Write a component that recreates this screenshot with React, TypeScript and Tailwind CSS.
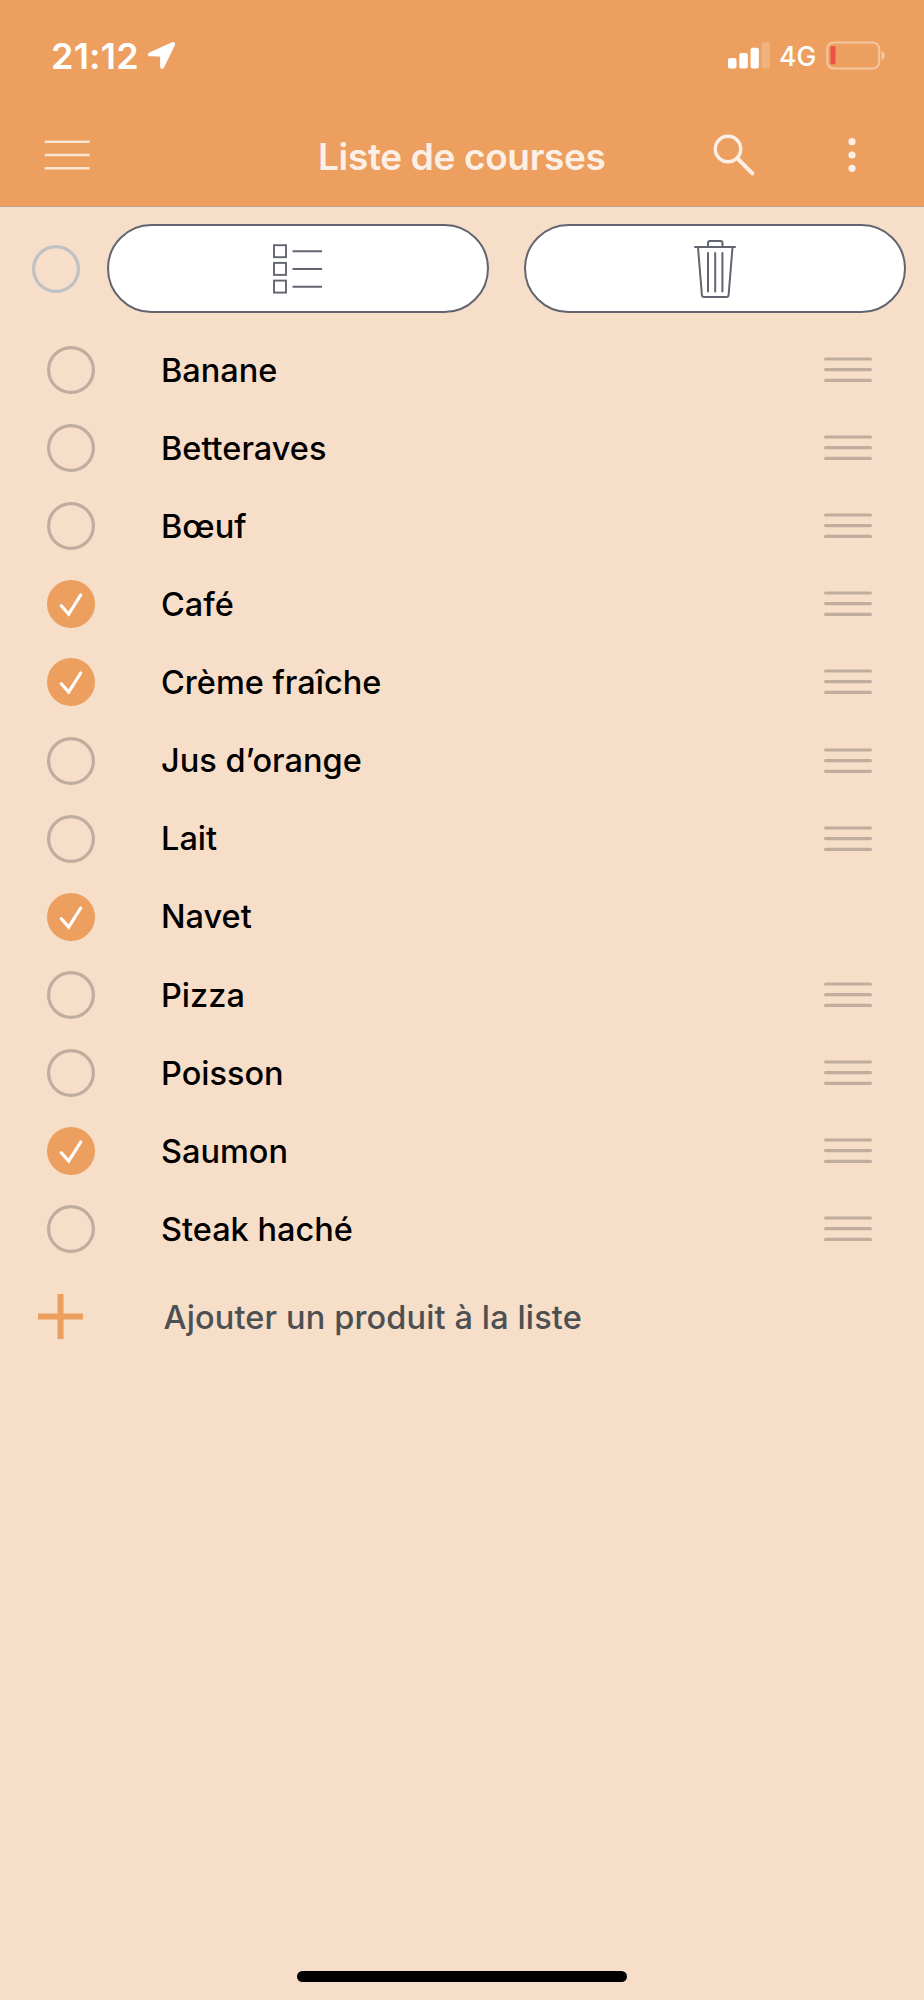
type Product = {
  name: string;
  checked?: boolean;
  fixed?: boolean;
};

const products: Product[] = [
  { name: "Banane" },
  { name: "Betteraves" },
  { name: "Bœuf" },
  { name: "Café", checked: true },
  { name: "Crème fraîche", checked: true },
  { name: "Jus d’orange" },
  { name: "Lait" },
  { name: "Navet", checked: true, fixed: true },
  { name: "Pizza" },
  { name: "Poisson" },
  { name: "Saumon", checked: true },
  { name: "Steak haché" },
];

function StatusBar() {
  return (
    <div className="flex h-[110px] items-center justify-between pl-[51px] pr-[38px] text-white">
      <div className="flex items-center gap-2">
        <span className="w-[88px] pt-px text-[36px] leading-none font-semibold tracking-[0.2px]">21:12</span>
        <svg width="30" height="30" viewBox="0 0 30 30" fill="currentColor">
          <path d="M25 2.300 2.100 12.800c-1.800 1-1.400 3.500.8 3.500l9.400.1c.5 0 .8.3.8.8l.1 9.600c0 2.300 2.900 2.700 3.800.8L27.900 5.200c.9-2-.9-3.900-2.900-2.900Z" />
        </svg>
      </div>
      <div className="flex items-center">
        <svg width="42" height="28" viewBox="0 0 42 28" fill="currentColor">
          <rect x="0" y="17" width="8.500" height="10.500" rx="2" />
          <rect x="11.300" y="12" width="8.500" height="15.500" rx="2" />
          <rect x="22.600" y="6.700" width="8.300" height="20.800" rx="2" />
          <rect x="33.700" y="1.300" width="8.300" height="26.200" rx="2" opacity=".2" />
        </svg>
        <span className="ml-[9px] w-[38px] pt-[3px] text-[26.500px] leading-none font-medium">4G</span>
        <svg className="ml-[9px]" width="60" height="30" viewBox="0 0 60 30" fill="none">
          <rect x="1.200" y="2.400" width="52" height="26" rx="6.500" stroke="#fff" strokeOpacity=".42" strokeWidth="2" />
          <path d="M55.500 11c4.500 1.600 4.500 7.400 0 9Z" fill="#fff" fillOpacity=".45" />
          <rect x="4.500" y="6.300" width="5" height="18" rx="1" fill="#ed5045" />
        </svg>
      </div>
    </div>
  );
}

function NavBar() {
  return (
    <div className="flex h-[90px] items-center pl-[44px] pr-[68px] text-[#fcf0e6]">
      <svg width="46" height="32" viewBox="0 0 46 32" stroke="#fbe5d3" strokeWidth="2.400">
        <path d="M.6 2.700H45.600M.6 16H45.600M.6 29.300H45.600" />
      </svg>
      <h1 className="ml-[228px] w-[290px] pt-[2px] text-[37px] leading-none font-semibold tracking-[-0.35px] whitespace-nowrap">
        Liste de courses
      </h1>
      <svg className="ml-[105px]" width="42" height="42" viewBox="0 0 42 42" fill="none" stroke="currentColor">
        <circle cx="15" cy="15" r="12.700" strokeWidth="3.400" />
        <path d="M24.500 24.500 39.300 39.300" strokeWidth="4" strokeLinecap="round" />
      </svg>
      <svg className="ml-auto" width="8" height="36" viewBox="0 0 8 36" fill="currentColor">
        <circle cx="4" cy="4.700" r="3.600" />
        <circle cx="4" cy="18" r="3.600" />
        <circle cx="4" cy="31.300" r="3.600" />
      </svg>
    </div>
  );
}

function ListIcon() {
  return (
    <svg width="50" height="50" viewBox="0 0 50 50" fill="none" stroke="#62656f" strokeWidth="1.900">
      <rect x="1" y="1.200" width="12" height="12" />
      <rect x="1" y="18.900" width="12" height="12" />
      <rect x="1" y="36.600" width="12" height="12" />
      <path d="M19.500 7.300H49M19.500 25H49M19.500 42.700H49" />
    </svg>
  );
}

function TrashIcon() {
  return (
    <svg width="42" height="58" viewBox="0 0 42 58" fill="none" stroke="#62656f" strokeWidth="2" strokeLinecap="round">
      <path d="M1 7H41M14 6.500V3Q14 1 16 1H26.500Q28.500 1 28.500 3V6.500" />
      <path d="m4 7.500 3.900 47.500Q8.100 57 10 57H32.500Q34.400 57 34.600 55L38.500 7.500" />
      <path d="M14 13V51.500M21.200 13V51.500M28.400 13V51.500" />
    </svg>
  );
}

function Ring({ className }: { className: string }) {
  return (
    <svg className={className} width="48" height="50" viewBox="0 0 48 50" fill="none" stroke="currentColor">
      <circle cx="24" cy="25" r="22.400" strokeWidth="3.200" />
    </svg>
  );
}

function Toolbar() {
  return (
    <div className="flex h-[124px] items-center pb-px pl-8">
      <Ring className="text-[#bec2c5]" />
      <button className="ml-[27px] flex h-[89px] w-[382px] items-center justify-center rounded-full border-2 border-[#62656f] bg-white">
        <ListIcon />
      </button>
      <button className="ml-[35px] flex h-[89px] w-[382px] items-center justify-center rounded-full border-2 border-[#62656f] bg-white">
        <TrashIcon />
      </button>
    </div>
  );
}

function Checkbox({ checked }: { checked?: boolean }) {
  if (!checked) {
    return <Ring className="text-[#c0ada0]" />;
  }
  return (
    <svg width="48" height="50" viewBox="0 0 48 50" fill="none">
      <circle cx="24" cy="25" r="24" fill="#ec9f5e" />
      <path d="m14.300 26.700 7.400 8.300L33.700 16" stroke="#fff" strokeWidth="3.200" strokeLinecap="round" />
    </svg>
  );
}

function DragHandle() {
  return (
    <svg className="ml-auto" width="48" height="26" viewBox="0 0 48 26" stroke="#c0ada0" strokeWidth="3.200" strokeLinecap="round">
      <path d="M1.600 2H46.400M1.600 12.700H46.400M1.600 23.400H46.400" />
    </svg>
  );
}

export default function App() {
  return (
    <div className="flex h-[2000px] w-[924px] flex-col bg-[#f7dec8] font-['Inter',sans-serif]">
      <header className="h-[207px] border-b border-[#c4a48a] bg-[#ec9f5e]">
        <StatusBar />
        <NavBar />
      </header>
      <Toolbar />

      <ul>
        {products.map((product) => (
          <li key={product.name} className="flex h-[78.100px] items-center pr-[52px] pl-[47px]">
            <Checkbox checked={product.checked} />
            <span className="ml-[66px] pt-[2px] text-[32.500px] leading-none font-medium whitespace-nowrap text-black">
              {product.name}
            </span>
            {!product.fixed && <DragHandle />}
          </li>
        ))}
      </ul>

      <div className="flex h-[97px] items-center pl-[38px]">
        <svg width="45" height="45" viewBox="0 0 45 45" stroke="#ec9f5e" strokeWidth="6">
          <path d="M0 22.500H45M22.500 0V45" />
        </svg>
        <span className="ml-[80.500px] pt-[3px] text-[32.500px] leading-none font-medium tracking-[0.13px] whitespace-nowrap text-[#4d5052]">
          Ajouter un produit à la liste
        </span>
      </div>

      <div className="mx-auto mt-auto mb-[18.500px] h-[10.500px] w-[330px] rounded-full bg-black" />
    </div>
  );
}
